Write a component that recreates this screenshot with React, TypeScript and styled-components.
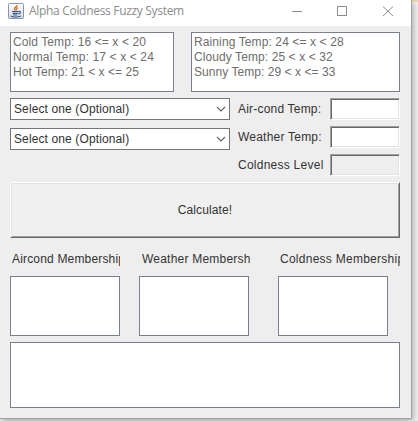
import React from 'react';
import styled, { createGlobalStyle } from 'styled-components';

const GlobalStyle = createGlobalStyle`
  * { box-sizing: border-box; }
  html, body { margin: 0; background: #e9e9e9; overflow: hidden; }
`;

const Desktop = styled.div`
  width: 418px;
  height: 421px;
  overflow: hidden;
  background: linear-gradient(90deg, #fff 410px, #f3d9b0 410px) top / 100% 2px no-repeat, #f4f4f4;
  font-family: "Liberation Sans", Arial, sans-serif;
  font-size: 12px;
  color: #333;
`;

const Window = styled.div`
  width: 412px;
  height: 419px;
  background: #eee;
  border-right: 1px solid #a3a3a3;
  border-bottom: 1px solid #a3a3a3;
  box-shadow: 1px 2px 7px rgba(0, 0, 0, 0.35);
`;

const TitleBar = styled.header`
  display: flex;
  align-items: center;
  height: 26px;
  padding: 0 0 5px 8px;
  background: #fff;
`;

const Title = styled.span`
  flex: 1;
  margin-left: 5px;
  font-family: "Open Sans", sans-serif;
  font-size: 12px;
  line-height: 20px;
  letter-spacing: -0.31px;
  color: #8c8c8c;
  white-space: nowrap;
`;

const Controls = styled.div`
  display: flex;
  width: 137px;
  height: 20px;
`;

const Content = styled.main`
  padding: 6px 11px 0 10px;
`;

const Row = styled.div<{ $gap?: number; $top?: number }>`
  display: flex;
  align-items: flex-start;
  gap: ${p => p.$gap ?? 0}px;
  margin-top: ${p => p.$top ?? 0}px;
`;

const TextArea = styled.div<{ $width: number; $height: number }>`
  width: ${p => p.$width}px;
  height: ${p => p.$height}px;
  flex: none;
  padding: 2px;
  border: 1px solid #7a7f8c;
  background: #fff;
  color: #6d6d6d;
  line-height: 15px;
  white-space: nowrap;
`;

const Line = styled.div<{ $spacing: number }>`
  letter-spacing: ${p => p.$spacing}px;
`;

const Stack = styled.div<{ $gap: number }>`
  display: flex;
  flex-direction: column;
  gap: ${p => p.$gap}px;
`;

const Combo = styled.div`
  display: flex;
  align-items: center;
  justify-content: space-between;
  width: 220px;
  height: 22px;
  padding: 0 3px;
  border: 1px solid #767676;
  background: #fff;
`;

const Text = styled.span<{ $spacing: number }>`
  line-height: 15px;
  letter-spacing: ${p => p.$spacing}px;
  white-space: nowrap;
`;

const FieldRow = styled.div`
  display: flex;
  align-items: center;
  justify-content: space-between;
  width: 162px;
  height: 22px;
`;

const Field = styled.div<{ $disabled?: boolean }>`
  width: 70px;
  height: 22px;
  border: 1px solid;
  border-color: #a0a0a0 #fff #fff #a0a0a0;
  background: ${p => (p.$disabled ? '#eee' : '#fff')};
  box-shadow: inset 1px 1px #696969, inset -1px -1px #e3e3e3;
`;

const Button = styled.button`
  display: flex;
  align-items: center;
  justify-content: center;
  width: 390px;
  height: 56px;
  margin-top: 6px;
  padding: 0;
  border: 1px solid;
  border-color: #fff #696969 #696969 #fff;
  background: #f0f0f0;
  box-shadow: inset 1px 1px #e3e3e3, inset -1px -1px #a0a0a0;
  font: inherit;
  color: inherit;
`;

const Headings = styled.div`
  display: grid;
  grid-template-columns: 108px 108px 120px;
  column-gap: 22px;
  margin-top: 14px;
  padding-left: 2px;

  > :last-child { margin-left: 8px; margin-right: -8px; }
`;

const Heading = styled.div<{ $spacing: number }>`
  height: 24px;
  line-height: 15px;
  letter-spacing: ${p => p.$spacing}px;
  overflow: hidden;
  white-space: nowrap;
`;

const Results = styled.div`
  display: flex;
  width: 378px;
  gap: 19px;

  > :last-child { margin-left: auto; }
`;

const JavaIcon = () => (
  <svg width="16" height="16" viewBox="0 0 16 16" fill="none">
    <defs>
      <linearGradient id="tile" x2="0" y2="1">
        <stop stopColor="#fff" />
        <stop offset="1" stopColor="#d2d9e7" />
      </linearGradient>
    </defs>
    <rect x=".5" y=".5" width="15" height="15" rx="1" fill="url(#tile)" stroke="#8b94ab" />
    <path d="M9 1.8C9.4 4 5.5 4.3 6.5 6.2L7.4 7.7M9.7 4.5C8 5.3 8 5.9 8.7 7.4" stroke="#d5772f" strokeWidth="1.4" />
    <path d="M4 8.5h6.5M4.6 10.4h5.2M5.2 12h4M10.5 8.3c2.8-.2 2.3 2.1-.2 2.6M2.6 12.9c2.2 1.5 7.9 1.4 10.2.2" stroke="#34577f" strokeWidth="1.1" />
  </svg>
);

const WindowButtons = () => (
  <svg width="137" height="20" viewBox="0 0 137 20" fill="none" stroke="#8b8b8b">
    <path d="M18 10.5h10M63.5 5.5h9v9h-9z" />
    <path d="m109 5.5 10 9.5m0-9.5L109 15" />
  </svg>
);

const Chevron = () => (
  <svg width="10" height="6" viewBox="0 0 10 6" fill="none" stroke="#606060" strokeWidth="1.1">
    <path d="m1 1 4 4 4-4" />
  </svg>
);

export default function App() {
  return (
    <>
      <GlobalStyle />
      <Desktop>
        <Window>
          <TitleBar>
            <JavaIcon />
            <Title>Alpha Coldness Fuzzy System</Title>
            <Controls><WindowButtons /></Controls>
          </TitleBar>
          <Content>
            <Row $gap={17}>
              <TextArea $width={164} $height={60}>
                <Line $spacing={0.09}>Cold Temp: 16 &lt;= x &lt; 20</Line>
                <Line $spacing={0.13}>Normal Temp: 17 &lt; x &lt; 24</Line>
                <Line $spacing={0.05}>Hot Temp: 21 &lt; x &lt;= 25</Line>
              </TextArea>
              <TextArea $width={209} $height={60}>
                <Line $spacing={0.11}>Raining Temp: 24 &lt;= x &lt; 28</Line>
                <Line $spacing={0.09}>Cloudy Temp: 25 &lt; x &lt; 32</Line>
                <Line $spacing={0.05}>Sunny Temp: 29 &lt; x &lt;= 33</Line>
              </TextArea>
            </Row>
            <Row $gap={8} $top={6}>
              <Stack $gap={8}>
                <Combo><Text $spacing={0.12}>Select one (Optional)</Text><Chevron /></Combo>
                <Combo><Text $spacing={0.12}>Select one (Optional)</Text><Chevron /></Combo>
              </Stack>
              <Stack $gap={6}>
                <FieldRow><Text $spacing={0.2}>Air-cond Temp:</Text><Field /></FieldRow>
                <FieldRow><Text $spacing={0.22}>Weather Temp:</Text><Field /></FieldRow>
                <FieldRow><Text $spacing={0.25}>Coldness Level</Text><Field $disabled /></FieldRow>
              </Stack>
            </Row>
            <Button><Text $spacing={0.12}>Calculate!</Text></Button>
            <Headings>
              <Heading $spacing={0.17}>Aircond Membership</Heading>
              <Heading $spacing={0.22}>Weather Membership</Heading>
              <Heading $spacing={0.26}>Coldness Membership</Heading>
            </Headings>
            <Results>
              <TextArea $width={110} $height={60} />
              <TextArea $width={110} $height={60} />
              <TextArea $width={110} $height={60} />
            </Results>
            <Row $top={6}>
              <TextArea $width={390} $height={66} />
            </Row>
          </Content>
        </Window>
      </Desktop>
    </>
  );
}
